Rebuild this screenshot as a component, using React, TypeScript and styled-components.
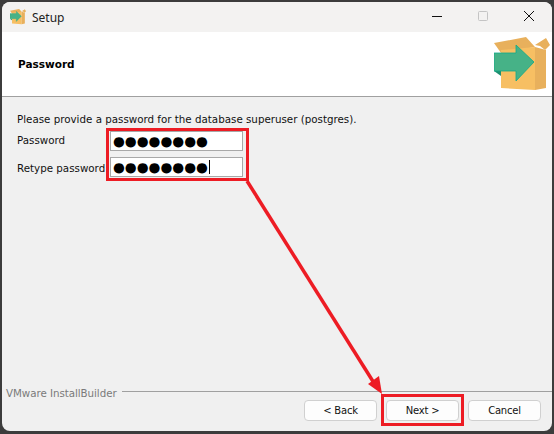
import React from 'react';
import styled, { createGlobalStyle } from 'styled-components';

const Global = createGlobalStyle`
  html, body {
    margin: 0;
    padding: 0;
    background: #3c3c3c;
  }
`;

export default function App() {
  return (
    <>
      <Global />
      <Backdrop>
        <Window>
          <TitleBar>
            <BoxIcon width={16} />
            <TitleText>Setup</TitleText>
            <Controls>
              <ControlButton>
                <svg width="10" height="10" viewBox="0 0 10 10">
                  <path d="M0 5.5H10" stroke="#111" />
                </svg>
              </ControlButton>
              <ControlButton>
                <svg width="10" height="10" viewBox="0 0 10 10">
                  <rect x="0.5" y="0.5" width="9" height="9" rx="1" fill="none" stroke="#c4c4c4" />
                </svg>
              </ControlButton>
              <ControlButton>
                <svg width="10" height="10" viewBox="0 0 10 10">
                  <path d="M0 0L10 10M10 0L0 10" stroke="#111" />
                </svg>
              </ControlButton>
            </Controls>
          </TitleBar>
          <Header>
            <HeaderTitle>Password</HeaderTitle>
            <BoxIcon width={56} />
          </Header>
          <Body>
            <Intro>Please provide a password for the database superuser (postgres).</Intro>
            <FormRow>
              <FieldLabel $up>Password</FieldLabel>
              <PasswordInput>
                <Dots>●●●●●●●●</Dots>
              </PasswordInput>
            </FormRow>
            <FormRow>
              <FieldLabel>Retype password</FieldLabel>
              <PasswordInput>
                <Dots>●●●●●●●●</Dots>
                <Caret />
              </PasswordInput>
            </FormRow>
          </Body>
          <Footer>
            <Brand>
              <BrandName>VMware InstallBuilder</BrandName>
              <BrandRule />
            </Brand>
            <Buttons>
              <Button>&lt; Back</Button>
              <Button>Next &gt;</Button>
              <Button>Cancel</Button>
            </Buttons>
          </Footer>
          <FieldsMark />
          <NextMark />
          <Arrow width="554" height="434" viewBox="0 0 554 434">
            <path d="M247 181L374 383" stroke="#ed1c24" strokeWidth="3.5" fill="none" />
            <path d="M382 394L368 384L379 376Z" fill="#ed1c24" />
          </Arrow>
        </Window>
      </Backdrop>
    </>
  );
}

const BoxIcon = ({ width }: { width: number }) => (
  <svg width={width} height={(width * 54) / 56} viewBox="0 0 56 54">
    <path d="M0 6L32 0L41 10L7 16Z" fill="#e8b05c" />
    <path d="M41 8L52 1L56 8L51 13L46 9Z" fill="#e8b05c" />
    <path d="M7 13L41 10V53L7 51Z" fill="#f7bf63" />
    <path d="M41 10L52 13V51L41 53Z" fill="#e8b05c" />
    <path d="M0 34L7 39V34Z" fill="#1f8f70" />
    <path d="M0 16H22V8L40 25L22 44V34H0Z" fill="#46b287" stroke="#0fa98a" strokeWidth="0.8" />
  </svg>
);

const Backdrop = styled.div`
  width: 554px;
  height: 434px;
  padding: 2px 2px 3px 2px;
  box-sizing: border-box;
`;

const Window = styled.div`
  position: relative;
  width: 100%;
  height: 100%;
  border-radius: 8px;
  overflow: hidden;
  background: #f0f0f0;
  display: flex;
  flex-direction: column;
  font-family: 'DejaVu Sans', sans-serif;
  font-size: 10.3px;
  color: #111;
`;

const TitleBar = styled.div`
  height: 30px;
  flex: none;
  background: #f3f2f1;
  display: flex;
  align-items: center;
  padding-left: 8px;
  gap: 6px;
`;

const TitleText = styled.span`
  font-family: 'Noto Sans', sans-serif;
  font-size: 12px;
  color: #222;
`;

const Controls = styled.div`
  margin-left: auto;
  align-self: flex-start;
  display: flex;
`;

const ControlButton = styled.div`
  width: 46px;
  height: 28px;
  display: flex;
  align-items: center;
  justify-content: center;
`;

const Header = styled.div`
  height: 65px;
  flex: none;
  box-sizing: border-box;
  background: #fff;
  border-bottom: 1px solid #a0a0a0;
  display: flex;
  align-items: center;
  justify-content: space-between;
  padding: 0 2px 0 16px;
`;

const HeaderTitle = styled.h1`
  margin: 0;
  font-size: 10.5px;
  font-weight: bold;
  color: #000;
`;

const Body = styled.div`
  flex: 1;
  padding: 16px 0 0 15px;
  display: flex;
  flex-direction: column;
`;

const Intro = styled.div`
  line-height: 13px;
  margin-bottom: 5px;
  white-space: nowrap;
`;

const FormRow = styled.div`
  display: flex;
  align-items: center;
  height: 20px;
  margin-bottom: 6px;
`;

const FieldLabel = styled.label<{ $up?: boolean }>`
  width: 93px;
  white-space: nowrap;
  padding: ${(p) => (p.$up ? '0 0 2px' : '2px 0 0')};
`;

const PasswordInput = styled.div`
  width: 133px;
  height: 20px;
  box-sizing: border-box;
  border: 1px solid #a8a8a8;
  background: #fff;
  display: flex;
  align-items: center;
  padding-left: 2px;
`;

const Dots = styled.span`
  font-size: 13.6px;
  line-height: 16px;
  padding-bottom: 1px;
  color: #000;
`;

const Caret = styled.span`
  width: 1px;
  height: 14px;
  margin-left: 1px;
  background: #000;
`;

const Footer = styled.div`
  flex: none;
  height: 41px;
`;

const Brand = styled.div`
  display: flex;
  align-items: center;
  gap: 5px;
  height: 3px;
  padding-left: 4px;
`;

const BrandName = styled.span`
  color: #7a7a7a;
  white-space: nowrap;
  letter-spacing: -0.05px;
  padding-top: 3px;
`;

const BrandRule = styled.div`
  flex: 1;
  height: 1px;
  background: #a0a0a0;
`;

const Buttons = styled.div`
  display: flex;
  justify-content: flex-end;
  gap: 9px;
  padding: 7px 11px 0 0;
`;

const Button = styled.div`
  width: 73px;
  height: 21px;
  box-sizing: border-box;
  background: #fdfdfd;
  border: 1px solid #d0d0d0;
  border-radius: 4px;
  display: flex;
  align-items: center;
  justify-content: center;
  font-size: 10px;
  letter-spacing: -0.2px;
  color: #111;
`;

const FieldsMark = styled.div`
  position: absolute;
  left: 104px;
  top: 126px;
  width: 143px;
  height: 53px;
  box-sizing: border-box;
  border: 3px solid #ed1c24;
`;

const NextMark = styled.div`
  position: absolute;
  left: 379px;
  top: 392px;
  width: 83px;
  height: 32px;
  box-sizing: border-box;
  border: 3px solid #ed1c24;
`;

const Arrow = styled.svg`
  position: absolute;
  left: -2px;
  top: -2px;
  pointer-events: none;
`;
